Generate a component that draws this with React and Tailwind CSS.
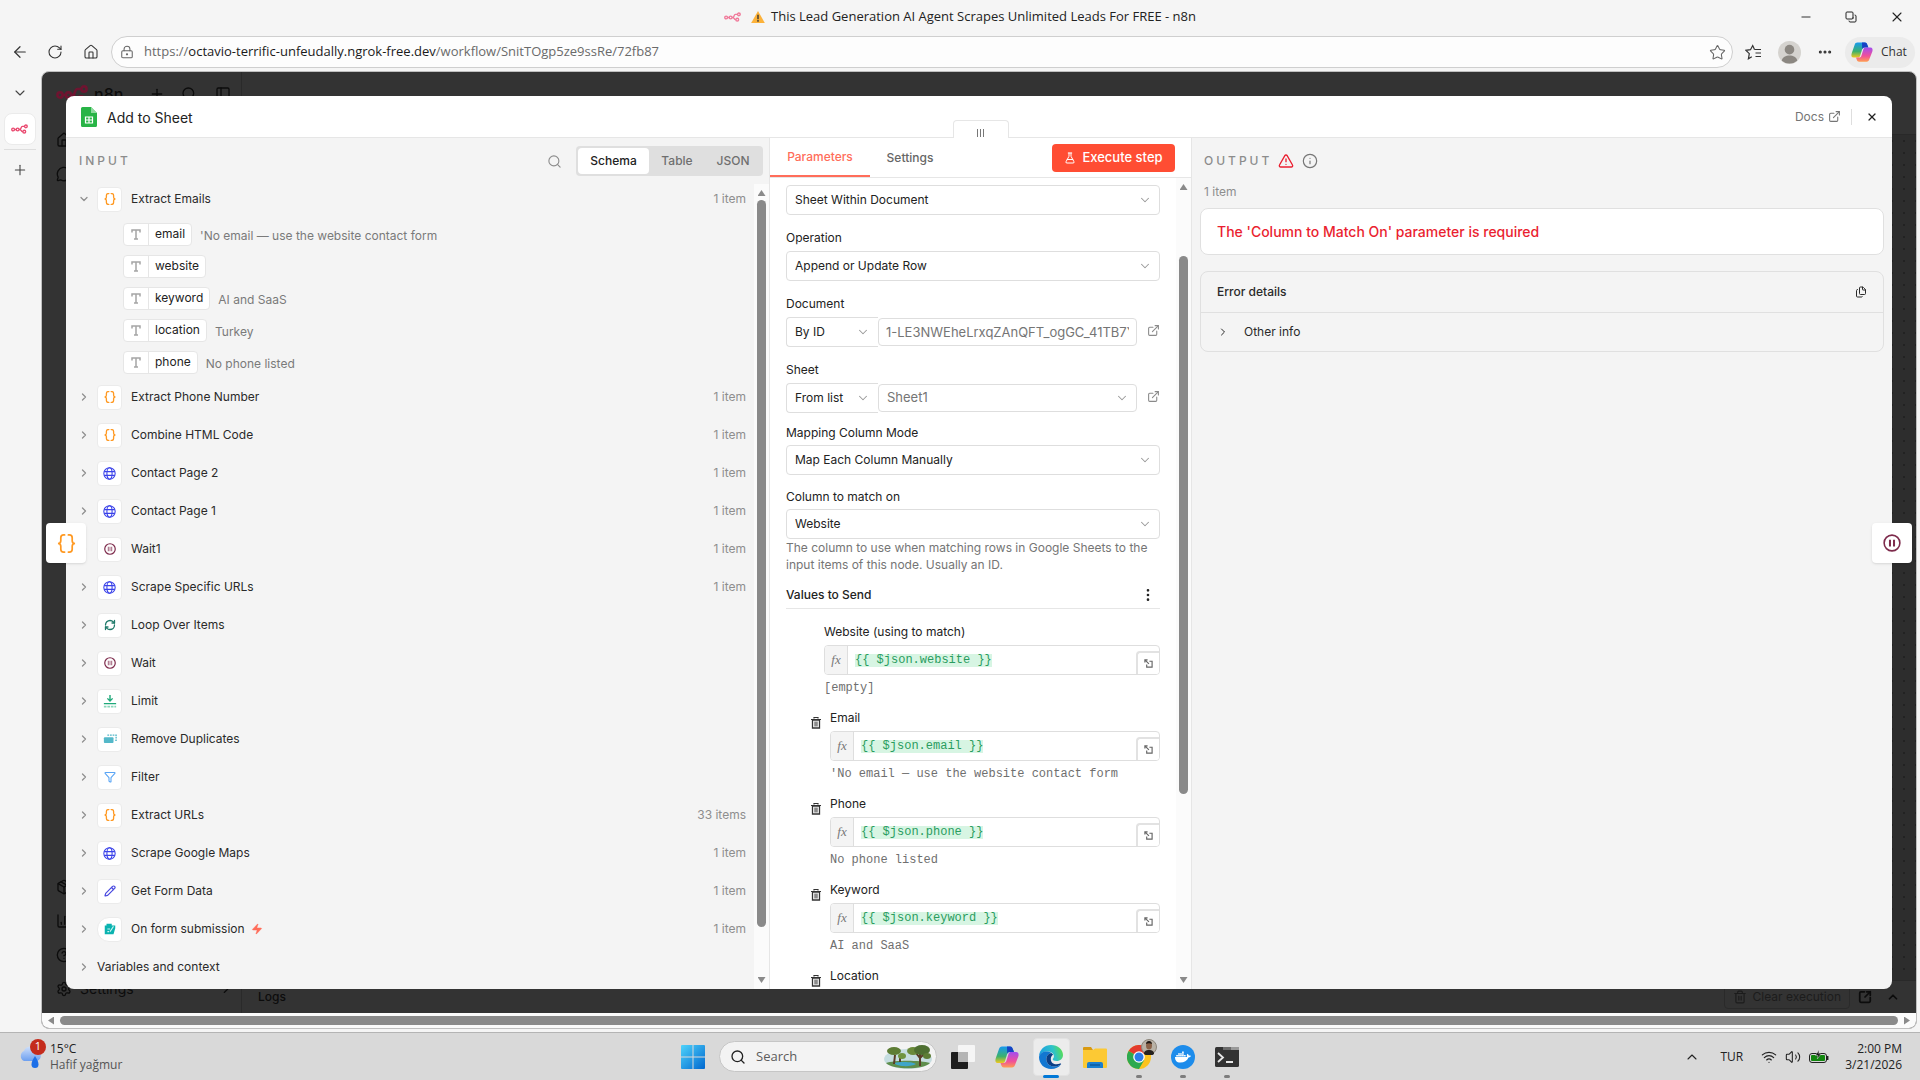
import React from 'react';
import {
    ArrowLeft, RotateCw, House, LockKeyhole, Star, X, Minus, Plus, ChevronDown, ChevronRight, ChevronUp,
    Search, ExternalLink, TriangleAlert, Info, FlaskConical, EllipsisVertical, Ellipsis, RefreshCw,
    Funnel, Pencil, Zap, PanelLeft, MessageCircle, Package, ChartColumn, CircleHelp, Settings,
    SquareArrowOutUpRight, Files, Wifi, Volume2, Trash2, Copy,
} from 'lucide-react';
import { FaDocker } from 'react-icons/fa';

const N8nLogo = ({ className }) => (
    <svg viewBox="0 0 32 18" className={className} fill="none" stroke="currentColor" strokeWidth="2.6">
        <circle cx="4" cy="10" r="2.6" />
        <circle cx="12.5" cy="10" r="2.6" />
        <circle cx="28" cy="4" r="2.6" />
        <circle cx="25" cy="14" r="2.6" />
        <path d="M6.6 10h3.3M15.1 10h1.4c3 0 1.8-6 5-6h3.9M16.5 10c3 0 2.6 4 5 4h1" />
    </svg>
);

const SheetsIcon = () => (
    <svg viewBox="0 0 16 20" className="h-5 w-4">
        <path d="M1.500 0H10l6 6v12.500a1.500 1.500 0 0 1-1.500 1.500h-13A1.500 1.500 0 0 1 0 18.500v-17A1.500 1.500 0 0 1 1.500 0z" fill="#28b446" />
        <path d="M10 0l6 6h-6z" fill="#8fdb9f" />
        <path d="M4.500 10h7v6h-7zM8 10v6M4.500 13h7" fill="none" stroke="#fff" strokeWidth="1.2" />
    </svg>
);

const CodeIcon = ({ className, strokeWidth = 1.8 }) => (
    <svg viewBox="0 0 20 20" className={className} fill="none" stroke="#ff9922" strokeWidth={strokeWidth} strokeLinecap="round">
        <path d="M8 1H7a3 3 0 0 0-3 3v3c0 2-1 3-3 3 2 0 3 1 3 3v3a3 3 0 0 0 3 3h1" />
        <path d="M12 1h1a3 3 0 0 1 3 3v3c0 2 1 3 3 3-2 0-3 1-3 3v3a3 3 0 0 1-3 3h-1" />
    </svg>
);

const GlobeIcon = () => (
    <svg viewBox="0 0 16 16" className="h-[13px] w-[13px]" fill="none" stroke="#3a42e9" strokeWidth="1.3">
        <circle cx="8" cy="8" r="7" />
        <ellipse cx="8" cy="8" rx="3.2" ry="7" />
        <path d="M1.500 5.700h13M1.500 10.300h13" />
    </svg>
);

const WaitIcon = ({ big }) => (
    <svg viewBox="0 0 16 16" className={big ? 'h-[18px] w-[18px]' : 'h-3 w-3'} fill="none" stroke="#7d2a4b" strokeWidth={big ? 1.4 : 1.6}>
        <circle cx="8" cy="8" r="7" />
        <path d="M6.2 5v6M9.8 5v6" strokeWidth={big ? 1.8 : 2.4} strokeOpacity={big ? 1 : 0.6} />
    </svg>
);

const LimitIcon = () => (
    <svg viewBox="0 0 16 16" className="h-3.5 w-3.5" fill="none" stroke="#1fa97a" strokeWidth="1.6">
        <path d="M8 1v6.500M5 5l3 3 3-3M1 11h14" />
        <path d="M1 14.500h14" stroke="#8ad6ba" strokeWidth="2" strokeDasharray="3 1" />
    </svg>
);

const DuplicatesIcon = () => (
    <svg viewBox="0 0 16 16" className="h-3.5 w-3.5">
        <path d="M5 3.500h10v6h-2" fill="none" stroke="#54b8c9" strokeWidth="1.5" strokeDasharray="2 1" />
        <rect x="1" y="6" width="11" height="6.500" rx="1" fill="#54b8c9" />
    </svg>
);

const FormIcon = () => (
    <svg viewBox="0 0 16 16" className="h-3.5 w-3.5">
        <path d="M4 2h6v2h4v3l-2 7H2V4h2z" fill="#0bb3b0" />
        <path d="M5 8h3M5 11h2M12 5l-4 6" stroke="#c9f3f1" strokeWidth="1.2" />
    </svg>
);

const TextTypeIcon = () => (
    <svg viewBox="0 0 10 11" className="h-[11px] w-[10px]" fill="none" stroke="#a5a5a5" strokeWidth="1.5">
        <path d="M1 3.500V1h8v2.500M5 1v9M3 10h4" />
    </svg>
);

const TrashIcon = () => (
    <svg viewBox="0 0 10 12" className="h-3 w-2.5">
        <path d="M3 1.500V.5h4v1M0 2.500h10" fill="none" stroke="#333" strokeWidth="1.2" />
        <path d="M1.500 3h7v8h-7z" fill="none" stroke="#333" strokeWidth="1.3" />
        <path d="M3.200 4.500h3.600v5H3.200z" fill="#8a8a8a" />
    </svg>
);

const CopilotIcon = ({ className }) => (
    <svg viewBox="0 0 24 24" className={className}>
        <defs>
            <linearGradient id="cop-a" x1="0" y1="0" x2="0" y2="1">
                <stop offset="0" stopColor="#1599f2" />
                <stop offset="0.6" stopColor="#3cb16c" />
                <stop offset="1" stopColor="#f2c81d" />
            </linearGradient>
            <linearGradient id="cop-b" x1="0" y1="0" x2="0" y2="1">
                <stop offset="0" stopColor="#a14df0" />
                <stop offset="0.6" stopColor="#f0509a" />
                <stop offset="1" stopColor="#ff9d52" />
            </linearGradient>
        </defs>
        <path d="M7 1.500h8c2 0 2.500 1.500 3 3L19 7h-4c-2 0-2.500 1-3 2.500l-2 6.500c-.5 1.500-1.200 2-2.500 2H3c-2.500 0-3-2-2.300-4.500L4 4c.5-1.600 1.300-2.500 3-2.500z" fill="url(#cop-a)" />
        <path d="M12 1.500h3c2 0 2.500 1.500 3 3L19 7h-4c-1.500 0-2.300.5-2.800 2z" fill="#1642c4" />
        <path d="M17 22.500H9c-2 0-2.500-1.500-3-3L5.500 18h3c2 0 2.500-1 3-2.500l2-6.500c.5-1.500 1.200-2 2.500-2h5c2.500 0 3 2 2.300 4.500L20 20c-.5 1.600-1.300 2.500-3 2.500z" fill="url(#cop-b)" />
    </svg>
);

const EdgeIcon = () => (
    <svg viewBox="0 0 24 24" className="h-6 w-6">
        <defs>
            <linearGradient id="edge-a" x1="0" y1="0.5" x2="1" y2="0.3">
                <stop offset="0" stopColor="#1b9de2" />
                <stop offset="0.6" stopColor="#2fc2c9" />
                <stop offset="1" stopColor="#5be04a" />
            </linearGradient>
        </defs>
        <path d="M0 11C.6 4.500 5.600 0 12 0c7 0 12 4.800 12 10 0 3.700-3 6-6.300 6-2.500 0-4-.8-4-1.700 0-.7 1.200-1.200 1.200-3C14.900 8.500 12 6.500 8.500 6.500 4.500 6.500 1.500 8.500 0 11z" fill="url(#edge-a)" />
        <path d="M0 12c.5-3.500 4-5.500 8-5.500 1.500 0 3 .5 4.300 1.400C9 8.500 7.300 11 7.300 14c0 4.500 3.500 7.500 8 7.500 2.500 0 4.500-.7 6.500-2C20 22.300 16.500 24 12 24 5.300 24 0 19 0 12z" fill="#1277d1" />
        <path d="M12.300 7.900C9 8.500 7.300 11 7.300 14c0 4.500 3.500 7.500 8 7.500 2.500 0 4.500-.7 6.500-2 .7-.5.2-1.400-.6-1-4.500 1.700-9.400.4-9.400-4.500 0-2 .8-3.500 2.300-4.600z" fill="#0b3f86" />
    </svg>
);

const ChromeIcon = () => (
    <svg viewBox="0 0 24 24" className="h-6 w-6">
        <circle cx="12" cy="12" r="12" fill="#fcc31e" />
        <path d="M12 12L1.600 6A12 12 0 0 1 22.400 6z" fill="#e33b2e" />
        <path d="M12 12L1.600 6A12 12 0 0 0 12 24l5.200-9z" fill="#2da94f" />
        <circle cx="12" cy="12" r="5.8" fill="#fff" />
        <circle cx="12" cy="12" r="4.5" fill="#2b7de9" />
    </svg>
);

const TreesPicture = () => (
    <svg viewBox="0 0 48 24" className="h-6 w-12">
        <ellipse cx="24" cy="14" rx="24" ry="10" fill="#c5dde0" />
        <path d="M2 18c8-3 34-3 44 0-6 7-38 7-44 0z" fill="#5e8e4c" />
        <path d="M10 18c8-2 20-1 22 1-5 3-18 3-22-1z" fill="#3fa6c9" />
        <path d="M10 19l1-9M36 21V9M32 8l4 5 5-5M16 17v-4" stroke="#5a3d26" strokeWidth="2" fill="none" />
        <ellipse cx="10" cy="6" rx="7" ry="4" fill="#5d7d35" />
        <ellipse cx="18" cy="11" rx="4" ry="3" fill="#6f9440" />
        <ellipse cx="29" cy="6" rx="6" ry="4" fill="#6a8a3a" />
        <ellipse cx="38" cy="5" rx="8" ry="5" fill="#4e6f31" />
        <ellipse cx="43" cy="11" rx="4" ry="3" fill="#5d7d35" />
    </svg>
);

const WeatherIcon = () => (
    <svg viewBox="0 0 24 24" className="h-6 w-6">
        <defs>
            <linearGradient id="cloud" x1="0" y1="0" x2="0" y2="1">
                <stop offset="0" stopColor="#cfe0fb" />
                <stop offset="1" stopColor="#6c9ff0" />
            </linearGradient>
        </defs>
        <path d="M6 16a5.500 5.500 0 0 1 0-10 6.500 6.500 0 0 1 12-1 5.700 5.700 0 0 1 1 11z" fill="url(#cloud)" />
        <path d="M17 11c2.500 4 3.500 6 3.500 8.500a3.500 3.500 0 0 1-7 0C13.500 17 14.500 15 17 11z" fill="#1c6fe8" />
    </svg>
);

const code = <CodeIcon className="h-3 w-3" strokeWidth={2.2} />;
const globe = <GlobeIcon />;

const fields = [
    ['email', "'No email — use the website contact form"],
    ['website', ''],
    ['keyword', 'AI and SaaS'],
    ['location', 'Turkey'],
    ['phone', 'No phone listed'],
];

const nodes = [
    { name: 'Extract Phone Number', icon: code, count: '1 item' },
    { name: 'Combine HTML Code', icon: code, count: '1 item' },
    { name: 'Contact Page 2', icon: globe, count: '1 item' },
    { name: 'Contact Page 1', icon: globe, count: '1 item' },
    { name: 'Wait1', icon: <WaitIcon />, count: '1 item' },
    { name: 'Scrape Specific URLs', icon: globe, count: '1 item' },
    { name: 'Loop Over Items', icon: <RefreshCw className="h-3 w-3 text-[#1f7a6a]" strokeWidth={2.6} /> },
    { name: 'Wait', icon: <WaitIcon /> },
    { name: 'Limit', icon: <LimitIcon /> },
    { name: 'Remove Duplicates', icon: <DuplicatesIcon /> },
    { name: 'Filter', icon: <Funnel className="h-3 w-3 text-[#5aa5f5]" strokeWidth={2.2} /> },
    { name: 'Extract URLs', icon: code, count: '33 items' },
    { name: 'Scrape Google Maps', icon: globe, count: '1 item' },
    { name: 'Get Form Data', icon: <Pencil className="h-3 w-3 text-[#4a4ae0]" strokeWidth={2.4} />, count: '1 item' },
    { name: 'On form submission', icon: <FormIcon />, count: '1 item', trigger: true },
];

const values = [
    { label: 'Email', expr: '{{ $json.email }}', result: "'No email — use the website contact form" },
    { label: 'Phone', expr: '{{ $json.phone }}', result: 'No phone listed' },
    { label: 'Keyword', expr: '{{ $json.keyword }}', result: 'AI and SaaS' },
    { label: 'Location' },
];

const Scrollbar = ({ start, size }) => (
    <div className="flex w-[15px] shrink-0 flex-col items-center bg-[#fbfbfb] py-1.5">
        <div className="h-1.5 w-2 bg-[#8a8a8a] [clip-path:polygon(50%_0,100%_100%,0_100%)]" />
        <div className="my-1 flex w-[9px] flex-1 flex-col">
            <div style={{ height: `${start}%` }} />
            <div className="rounded-full bg-[#8a8a8a]" style={{ height: `${size}%` }} />
        </div>
        <div className="h-1.5 w-2 bg-[#8a8a8a] [clip-path:polygon(0_0,100%_0,50%_100%)]" />
    </div>
);

const NodeRow = ({ name, icon, count, trigger, open }) => (
    <button className="flex h-[38px] w-full items-center pr-2 pl-3 text-left">
        {open ? <ChevronDown className="h-3 w-3 text-[#8f8f8f]" strokeWidth={2.6} /> : <ChevronRight className="h-3 w-3 text-[#8f8f8f]" strokeWidth={2.6} />}
        <span className={`ml-[7px] flex h-[25px] w-[25px] items-center justify-center border border-[#ebebeb] bg-white ${trigger ? 'rounded-l-xl rounded-r' : 'rounded'}`}>
            {icon}
        </span>
        <span className="ml-[9px] text-[#2a2a2a]">{name}</span>
        {trigger && <Zap className="ml-1.5 h-3 w-3 fill-[#ff6d5a] text-[#ff6d5a]" strokeWidth={1} />}
        <span className="ml-auto text-[#8e8e8e]">{count}</span>
    </button>
);

const SelectBox = ({ id, label, value, className = '', selectClass = '' }) => (
    <div className={`relative ${className}`}>
        <select id={id} aria-label={label} className={`h-full w-full appearance-none rounded border border-[#dedede] bg-white px-2 text-[#222] ${selectClass}`}>
            <option>{value}</option>
        </select>
        <ChevronDown className="pointer-events-none absolute top-1/2 right-2 h-3.5 w-3.5 -translate-y-1/2 text-[#999]" strokeWidth={1.8} />
    </div>
);

const Label = ({ htmlFor, children, className = 'mt-[15px] mb-[5px]' }) => (
    <label htmlFor={htmlFor} className={`block leading-4 text-[#222] ${className}`}>{children}</label>
);

const Expression = ({ label, expr, result }) => (
    <>
        <div className="mb-[5px] leading-4 text-[#222]">{label}</div>
        {expr && (
            <>
                <div className="relative flex h-[30px] overflow-hidden rounded border border-[#dedede] bg-white">
                    <span className="flex w-[23px] items-center justify-center border-r border-[#dedede] bg-[#f4f4f4] font-['Liberation_Serif',serif] text-[13px] text-[#777] italic">fx</span>
                    <div role="textbox" aria-label={label} className="flex items-center pl-[7px]">
                        <code className="bg-[#d7f5e3] font-['Liberation_Mono',monospace] leading-[13px] text-[#2a9d5f]">{expr}</code>
                    </div>
                    <button aria-label="Open editor" className="absolute right-0 bottom-0 flex h-[23px] w-[23px] items-center justify-center rounded-tl border-t-2 border-l-2 border-[#e2e2e2] bg-white">
                        <svg viewBox="0 0 10 10" className="h-[9px] w-[9px]" fill="none" stroke="#666" strokeWidth="1.3">
                            <path d="M1 4V1h3M1 1l4.500 4.500M6 2.500h3V9H3V6" />
                        </svg>
                    </button>
                </div>
                <div className="mt-[5px] font-['Liberation_Mono',monospace] leading-4 text-[#6f6f6f]">{result}</div>
            </>
        )}
    </>
);

const InputPanel = () => (
    <section className="flex min-w-0 flex-col bg-[#f4f4f4]">
        <div className="flex h-[46px] shrink-0 items-center pr-1.5 pl-[13px]">
            <h2 className="text-xs font-medium tracking-[3px] text-[#8c8c8c]">INPUT</h2>
            <button aria-label="Search" className="mr-3.5 ml-auto text-[#8c8c8c]"><Search className="h-[15px] w-[15px]" strokeWidth={1.8} /></button>
            <div className="flex h-[30px] rounded bg-[#dfdfdf] p-0.5 font-medium text-[#6f6f6f]">
                <button className="w-[71px] rounded bg-white text-[#222]">Schema</button>
                <button className="w-14">Table</button>
                <button className="w-14">JSON</button>
            </div>
        </div>
        <div className="flex min-h-0 flex-1">
            <div className="min-w-0 flex-1 overflow-hidden">
                <div className="-mt-1">
                    <NodeRow name="Extract Emails" icon={code} count="1 item" open />
                    <ul className="pl-[57px]">
                        {fields.map(([key, value]) => (
                            <li key={key} className="flex h-8 items-center">
                                <span className="flex h-[23px] items-center rounded border border-[#e6e6e6] bg-white text-[#222]">
                                    <span className="flex h-full w-[25px] items-center justify-center border-r border-[#e6e6e6]"><TextTypeIcon /></span>
                                    <span className="px-1.5">{key}</span>
                                </span>
                                <span className="ml-2 pt-1 text-[#7a7a7a]">{value}</span>
                            </li>
                        ))}
                    </ul>
                    {nodes.map((node) => <NodeRow key={node.name} {...node} />)}
                    <button className="flex h-[38px] items-center pl-3 text-[#2a2a2a]">
                        <ChevronRight className="mr-[7px] h-3 w-3 text-[#8f8f8f]" strokeWidth={2.6} /> Variables and context
                    </button>
                </div>
            </div>
            <Scrollbar start={0} size={94} />
        </div>
    </section>
);

const ParametersPanel = () => (
    <section className="relative flex min-w-0 flex-col border-x border-[#e6e6e6] bg-white">
        <button aria-label="Drag panels" className="absolute -top-[18px] left-1/2 flex h-[18px] w-14 -translate-x-1/2 items-center justify-center gap-0.5 rounded-t border border-b-0 border-[#e6e6e6] bg-white pt-1.5">
            <i className="h-2 w-px bg-[#777]" />
            <i className="h-2 w-px bg-[#777]" />
            <i className="h-2 w-px bg-[#777]" />
        </button>
        <div className="flex h-10 shrink-0 border-b border-[#e6e6e6] pr-4 font-medium">
            <button className="w-[100px] border-b-2 border-[#ff6d5a] text-[#ff6d5a]">Parameters</button>
            <button className="w-20 text-[#666]">Settings</button>
            <button className="mt-1.5 ml-auto flex h-7 w-[123px] items-center justify-center gap-1.5 rounded bg-[#ff4d33] text-[13px] text-white">
                <FlaskConical className="h-3 w-3" /> Execute step
            </button>
        </div>
        <div className="flex min-h-0 flex-1">
            <div className="min-w-0 flex-1 overflow-hidden px-4 pt-[7px]">
                <SelectBox label="Resource" value="Sheet Within Document" className="h-[30px]" />
                <Label htmlFor="operation">Operation</Label>
                <SelectBox id="operation" value="Append or Update Row" className="h-[30px]" />
                <Label htmlFor="document">Document</Label>
                <div className="flex items-center">
                    <SelectBox label="Document mode" value="By ID" className="h-[30px] w-[92px]" selectClass="rounded-r-none border-r-0" />
                    <input id="document" defaultValue="1-LE3NWEheLrxqZAnQFT_ogGC_41TB7Y" className="h-7 min-w-0 flex-1 rounded border border-[#dedede] px-[7px] text-[13px] text-[#757575]" />
                    <a href="#document" aria-label="Open document" className="ml-2.5 pb-1 text-[#8a8a8a]"><ExternalLink className="h-[13px] w-[13px]" /></a>
                </div>
                <Label htmlFor="sheet">Sheet</Label>
                <div className="flex items-center">
                    <SelectBox label="Sheet mode" value="From list" className="h-[30px] w-[92px]" selectClass="rounded-r-none border-r-0" />
                    <SelectBox id="sheet" value="Sheet1" className="h-7 flex-1" selectClass="text-[13px] text-[#757575]" />
                    <a href="#sheet" aria-label="Open sheet" className="ml-2.5 pb-1 text-[#8a8a8a]"><ExternalLink className="h-[13px] w-[13px]" /></a>
                </div>
                <Label htmlFor="mapping" className="mt-3 mb-1">Mapping Column Mode</Label>
                <SelectBox id="mapping" value="Map Each Column Manually" className="h-[30px]" />
                <Label htmlFor="match" className="mt-3.5 mb-1">Column to match on</Label>
                <SelectBox id="match" value="Website" className="h-[30px]" />
                <p className="leading-[17px] text-[#757575]">The column to use when matching rows in Google Sheets to the input items of this node. Usually an ID.</p>
                <div className="mt-[9px] flex h-[27px] items-center justify-between border-b border-[#e6e6e6]">
                    <h3 className="font-medium text-[#222]">Values to Send</h3>
                    <button aria-label="More" className="pr-1 text-[#222]"><EllipsisVertical className="h-4 w-4" /></button>
                </div>
                <div className="mt-[15px] pl-[38px]">
                    <Expression label="Website (using to match)" expr="{{ $json.website }}" result="[empty]" />
                </div>
                {values.map((value) => (
                    <div key={value.label} className="mt-3.5 flex">
                        <button aria-label={`Remove ${value.label}`} className="mr-[9px] ml-[25px] h-3 shrink-0 pt-[7px]"><TrashIcon /></button>
                        <div className="min-w-0 flex-1"><Expression {...value} /></div>
                    </div>
                ))}
            </div>
            <Scrollbar start={8} size={69} />
        </div>
    </section>
);

const OutputPanel = () => (
    <section className="min-w-0 bg-[#f4f4f4] px-2">
        <div className="flex h-[46px] items-center pl-1">
            <h2 className="text-xs font-medium tracking-[3px] text-[#8c8c8c]">OUTPUT</h2>
            <TriangleAlert className="ml-1.5 h-4 w-4 text-[#ea1f30]" />
            <Info className="ml-2 h-4 w-4 text-[#777]" strokeWidth={1.8} />
        </div>
        <p className="pl-1 leading-4 text-[#8e8e8e]">1 item</p>
        <div className="mt-2 flex h-[47px] items-center rounded-lg border border-[#e0e0e0] bg-white px-4 text-sm font-medium text-[#ea1f30]">
            The 'Column to Match On' parameter is required
        </div>
        <div className="mt-4 rounded-lg border border-[#e0e0e0] text-[#2a2a2a]">
            <div className="flex h-[41px] items-center justify-between border-b border-[#e0e0e0] px-4">
                <h3 className="font-medium">Error details</h3>
                <button aria-label="Copy error"><Files className="h-3 w-3" /></button>
            </div>
            <button className="flex h-[38px] w-full items-center px-4 text-left">
                <ChevronRight className="mr-[15px] h-3 w-3" /> Other info
            </button>
        </div>
    </section>
);

// The canvas that stays behind the open dialog
const DimmedEditor = () => (
    <div className="flex h-full text-[#0c0c0c]" aria-hidden="true">
        <div className="flex w-[200px] flex-col border-r border-[#2a2a2a] pl-3.5">
            <div className="flex h-11 items-center gap-1.5 text-base font-medium">
                <N8nLogo className="h-[18px] w-8 text-[#6e1430]" />
                <span>n8n</span>
                <Plus className="ml-5 h-4 w-4" />
                <Search className="ml-2.5 h-4 w-4" />
                <PanelLeft className="ml-3 h-4 w-4" />
            </div>
            <House className="mt-4 h-4 w-4" />
            <MessageCircle className="mt-[18px] h-4 w-4" />
            <div className="mt-auto flex flex-col gap-[18px] pb-4">
                <Package className="h-4 w-4" />
                <ChartColumn className="h-4 w-4" />
                <CircleHelp className="h-4 w-4" />
                <div className="flex h-4 items-center text-sm">
                    <Settings className="h-4 w-4" />
                    <span className="ml-2">Settings</span>
                    <ChevronRight className="mr-2 ml-auto h-3.5 w-3.5" />
                </div>
            </div>
        </div>
        <div className="flex flex-1 flex-col">
            <div className="h-[63px] border-b border-[#292929]" />
            <div className="flex-1 bg-[#2d2d2d] [background-image:radial-gradient(#222_1px,transparent_1px)] [background-size:12px_12px]" />
            <div className="flex h-[33px] items-center border-t border-[#292929] px-4 text-xs">
                <span className="font-medium">Logs</span>
                <span className="ml-auto flex h-6 items-center gap-1.5 rounded border border-[#2a2a2a] px-2 text-[#1c1c1c]">
                    <Trash2 className="h-3.5 w-3.5" /> Clear execution
                </span>
                <SquareArrowOutUpRight className="ml-2 h-3.5 w-3.5" strokeWidth={3} />
                <ChevronUp className="ml-3.5 h-3.5 w-3.5" strokeWidth={3} />
            </div>
        </div>
    </div>
);

const TaskIcon = ({ children, label, running }) => (
    <button aria-label={label} className="relative flex h-10 w-11 items-center justify-center">
        {children}
        {running && <i className="absolute -bottom-px h-[3px] w-1.5 rounded-full bg-[#7d7d7d]" />}
    </button>
);

const Taskbar = () => (
    <footer className="grid h-12 shrink-0 grid-cols-[1fr_auto_1fr] items-center border-t border-[#b4b4b4] bg-[#d9d9d9] font-['Open_Sans','Noto_Sans',sans-serif] text-[#222]">
        <div className="relative flex items-center pl-[18px]">
            <WeatherIcon />
            <span className="absolute -top-0.5 left-[30px] flex h-4 w-4 items-center justify-center rounded-full bg-[#c42b1c] text-[11px] text-white">1</span>
            <div className="ml-2 text-xs leading-4">
                <div>15°C</div>
                <div className="text-[#555]">Hafif yağmur</div>
            </div>
        </div>
        <div className="flex items-center">
            <TaskIcon label="Start">
                <svg viewBox="0 0 24 24" className="h-6 w-6">
                    <defs>
                        <linearGradient id="win" x1="0" y1="0" x2="1" y2="1">
                            <stop offset="0" stopColor="#4fd3fb" />
                            <stop offset="1" stopColor="#0067cf" />
                        </linearGradient>
                    </defs>
                    <path d="M0 1a1 1 0 0 1 1-1h10.500v11.500H0zM12.500 0H23a1 1 0 0 1 1 1v10.500H12.500zM0 12.500h11.500V24H1a1 1 0 0 1-1-1zM12.500 12.500H24V23a1 1 0 0 1-1 1H12.500z" fill="url(#win)" />
                </svg>
            </TaskIcon>
            <label className="mx-1 flex h-[31px] w-[218px] items-center rounded-full border border-[#c6c6c6] bg-[#f3f3f3] pr-1 pl-2.5">
                <Search className="h-4 w-4 shrink-0" />
                <input aria-label="Search" placeholder="Search" className="ml-2.5 min-w-0 flex-1 text-[13px] placeholder:text-[#5c5c5c]" />
                <TreesPicture />
            </label>
            <TaskIcon label="Task view">
                <svg viewBox="0 0 24 24" className="h-6 w-6">
                    <rect x="0" y="7" width="17" height="17" rx="1" fill="#1e1e1e" />
                    <rect x="7" y="0" width="17" height="17" rx="1" fill="#f5f5f5" />
                    <rect x="7" y="7" width="10" height="10" fill="#b5b5b5" />
                </svg>
            </TaskIcon>
            <TaskIcon label="Copilot"><CopilotIcon className="h-6 w-6" /></TaskIcon>
            <TaskIcon label="Edge">
                <span className="flex h-[38px] w-[37px] items-center justify-center rounded border border-[#e2e2e2] bg-[#ececec]"><EdgeIcon /></span>
                <i className="absolute -bottom-px h-[3px] w-4 rounded-full bg-[#0078d7]" />
            </TaskIcon>
            <TaskIcon label="Files">
                <svg viewBox="0 0 24 24" className="h-6 w-6">
                    <path d="M0 3a1 1 0 0 1 1-1h7l2 3H0z" fill="#d99a11" />
                    <path d="M0 5h10l2-1.500h11a1 1 0 0 1 1 1V22a1 1 0 0 1-1 1H1a1 1 0 0 1-1-1z" fill="#fcc934" />
                    <path d="M4 23v-4a2 2 0 0 1 2-2h12a2 2 0 0 1 2 2v4z" fill="#1a7fd0" />
                    <path d="M7 20h10" stroke="#0c5a9e" strokeWidth="1.5" />
                </svg>
            </TaskIcon>
            <TaskIcon label="Chrome" running>
                <ChromeIcon />
                <svg viewBox="0 0 16 16" className="absolute top-0.5 right-1 h-4 w-4">
                    <circle cx="8" cy="8" r="7.5" fill="#b9b2a6" stroke="#8d867b" />
                    <path d="M3 15c0-3 2-4 5-4s5 1 5 4a8 8 0 0 1-10 0z" fill="#26221f" />
                    <ellipse cx="8" cy="6.5" rx="3" ry="4" fill="#8a6248" />
                    <path d="M5 5c0-4 6-4 6 0-2-1-4-1-6 0z" fill="#1f1916" />
                </svg>
            </TaskIcon>
            <TaskIcon label="Docker" running>
                <span className="flex h-6 w-6 items-center justify-center rounded-full bg-[#1d8ceb]"><FaDocker className="h-4 w-4 text-white" /></span>
            </TaskIcon>
            <TaskIcon label="Terminal" running>
                <svg viewBox="0 0 24 20" className="h-5 w-6">
                    <rect width="24" height="20" rx="1.5" fill="#333" />
                    <path d="M8 0h8v3H8z" fill="#6b6b6b" />
                    <path d="M16 0h8v3h-8z" fill="#999" />
                    <path d="M3 6l5 4.500L3 15M11 15h7" fill="none" stroke="#e8e8e8" strokeWidth="1.8" />
                </svg>
            </TaskIcon>
        </div>
        <div className="flex items-center justify-end pr-[18px] text-xs">
            <ChevronUp className="mr-5 h-4 w-4" strokeWidth={1.6} />
            <span className="mr-[18px]">TUR</span>
            <Wifi className="mr-2 h-4 w-4" strokeWidth={1.8} />
            <Volume2 className="mr-2 h-4 w-4" strokeWidth={1.6} />
            <svg viewBox="0 0 20 14" className="mr-4 h-3.5 w-5">
                <rect x="0.5" y="3.5" width="17" height="9" rx="2.5" fill="none" stroke="#222" />
                <rect x="2" y="5" width="14" height="6" rx="1" fill="#12860f" />
                <path d="M18.700 6v4" stroke="#222" strokeWidth="1.5" />
                <path d="M10 0L6.500 5.500H9L8.300 9 12 4H9.800z" fill="#111" stroke="#d9d9d9" strokeWidth="0.5" />
            </svg>
            <div className="text-right leading-4">
                <div>2:00 PM</div>
                <div>3/21/2026</div>
            </div>
        </div>
    </footer>
);

const BrowserBar = () => (
    <header className="shrink-0 font-['Open_Sans','Noto_Sans',sans-serif] text-[#222]">
        <div className="grid h-9 grid-cols-[1fr_auto_1fr] items-center pb-0.5">
            <div />
            <div className="flex items-center">
                <N8nLogo className="mr-2.5 h-3 w-[17px] text-[#f07a9a]" />
                <svg viewBox="0 0 16 14" className="mr-1.5 h-3 w-3.5">
                    <path d="M8 0l8 14H0z" fill="#fcb23a" />
                    <path d="M8 4.500v5M8 10.500v2" stroke="#333" strokeWidth="1.6" />
                </svg>
                <h1 className="text-[13px]">This Lead Generation AI Agent Scrapes Unlimited Leads For FREE - n8n</h1>
            </div>
            <div className="flex justify-end gap-8 pr-[15px]">
                <button aria-label="Minimize"><Minus className="h-3.5 w-3.5" strokeWidth={1.6} /></button>
                <button aria-label="Restore"><Copy className="h-3 w-3 -scale-x-100 rotate-90" strokeWidth={2} /></button>
                <button aria-label="Close"><X className="h-4 w-4" strokeWidth={1.6} /></button>
            </div>
        </div>
        <div className="flex h-8 items-center pr-[5px] pl-[11px] text-[#333]">
            <button aria-label="Back"><ArrowLeft className="h-[18px] w-[18px]" strokeWidth={1.6} /></button>
            <button aria-label="Reload" className="ml-[18px]"><RotateCw className="h-4 w-4" strokeWidth={1.6} /></button>
            <button aria-label="Home" className="mr-3 ml-5"><House className="h-4 w-4" strokeWidth={1.6} /></button>
            <div className="flex h-8 min-w-0 flex-1 items-center rounded-full border border-[#cfcfcf] bg-[#fdfdfd] pr-1.5 pl-2">
                <LockKeyhole className="h-3.5 w-3.5 text-[#666]" strokeWidth={1.8} />
                <div role="textbox" aria-label="Address" className="ml-2.5 flex-1 text-[13px] text-[#6a6a6a]">
                    https://<span className="text-[#1a1a1a]">octavio-terrific-unfeudally.ngrok-free.dev</span>/workflow/SnitTOgp5ze9ssRe/72fb87
                </div>
                <button aria-label="Add favorite" className="text-[#666]"><Star className="h-[17px] w-[17px]" strokeWidth={1.5} /></button>
            </div>
            <button aria-label="Favorites" className="ml-3">
                <svg viewBox="0 0 17 16" className="h-4 w-[17px]" fill="none" stroke="#333" strokeWidth="1.2">
                    <path d="M9.500 5.500L7.700 1.500 5.500 5.700.8 6.300l3.500 3.300-.9 5.200 3.400-2M9.500 5.500H16M10.500 9H16M10.500 12.500H16" />
                </svg>
            </button>
            <button aria-label="Profile" className="ml-4">
                <svg viewBox="0 0 24 24" className="h-[23px] w-[23px]">
                    <circle cx="12" cy="12" r="12" fill="#d5d3cf" />
                    <circle cx="12" cy="9" r="5" fill="#8b8781" />
                    <path d="M4 20.500c1-7 15-7 16 0a12 12 0 0 1-16 0z" fill="#8b8781" />
                </svg>
            </button>
            <button aria-label="Menu" className="ml-4"><Ellipsis className="h-4 w-4" strokeWidth={2.6} /></button>
            <button className="ml-3 flex h-[31px] w-[70px] items-center gap-2 rounded-full bg-[#ebebeb] pl-1.5">
                <CopilotIcon className="h-[22px] w-[22px]" /> Chat
            </button>
        </div>
    </header>
);

const App = () => (
    <div className="flex h-screen flex-col overflow-hidden bg-[#f5f5f5] font-[Inter,sans-serif] text-xs">
        <BrowserBar />
        <div className="flex min-h-0 flex-1 pt-[3px] pr-[3px] pb-[3px]">
            <nav className="flex w-[41px] shrink-0 flex-col items-center pr-0.5 text-[#444]">
                <button aria-label="Tabs" className="mt-3.5"><ChevronDown className="h-4 w-4" strokeWidth={1.6} /></button>
                <button aria-label="Workflow tab" className="mt-3 flex h-8 w-8 items-center justify-center rounded-lg border border-[#ebebeb] bg-white">
                    <N8nLogo className="h-3 w-[17px] text-[#ea4b71]" />
                </button>
                <hr className="mt-1 w-8 border-[#dedede]" />
                <button aria-label="New tab" className="mt-3"><Plus className="h-4 w-4" strokeWidth={1.6} /></button>
            </nav>
            <main className="flex min-w-0 flex-1 flex-col overflow-hidden rounded-lg border border-[#bfbfbf] bg-[#333]">
                <div className="relative min-h-0 flex-1">
                    <DimmedEditor />
                    <div role="dialog" aria-label="Add to Sheet" className="absolute inset-6 flex flex-col">
                        <div className="flex min-h-0 flex-1 flex-col overflow-hidden rounded-lg">
                            <div className="flex h-[42px] shrink-0 items-center border-b border-[#e6e6e6] bg-white pr-2.5 pl-[15px]">
                                <SheetsIcon />
                                <h2 className="ml-2.5 pt-0.5 text-sm text-[#222]">Add to Sheet</h2>
                                <a href="#docs" className="ml-auto flex items-center gap-1 text-[#757575]">Docs <ExternalLink className="h-[13px] w-[13px]" /></a>
                                <span className="mx-2.5 h-4 w-px bg-[#dedede]" />
                                <button aria-label="Close dialog" className="px-1 text-[#222]"><X className="h-3 w-3" strokeWidth={2.4} /></button>
                            </div>
                            <div className="grid min-h-0 flex-1 grid-cols-[703fr_423px_700fr] grid-rows-[minmax(0,1fr)]">
                                <InputPanel />
                                <ParametersPanel />
                                <OutputPanel />
                            </div>
                        </div>
                        <button aria-label="Previous node" className="absolute top-[427px] -left-5 flex h-10 w-10 items-center justify-center rounded bg-white shadow">
                            <CodeIcon className="h-[19px] w-[19px]" />
                        </button>
                        <button aria-label="Next node" className="absolute top-[427px] -right-5 flex h-10 w-10 items-center justify-center rounded bg-white shadow">
                            <WaitIcon big />
                        </button>
                    </div>
                </div>
                <div className="flex h-[15px] shrink-0 items-center bg-[#fbfbfb] px-1.5">
                    <div className="h-2 w-1.5 bg-[#8a8a8a] [clip-path:polygon(0_50%,100%_0,100%_100%)]" />
                    <div className="mx-1.5 h-[9px] flex-1 rounded-full bg-[#8a8a8a]" />
                    <div className="h-2 w-1.5 bg-[#8a8a8a] [clip-path:polygon(0_0,100%_50%,0_100%)]" />
                </div>
            </main>
        </div>
        <Taskbar />
    </div>
);

export default App;
